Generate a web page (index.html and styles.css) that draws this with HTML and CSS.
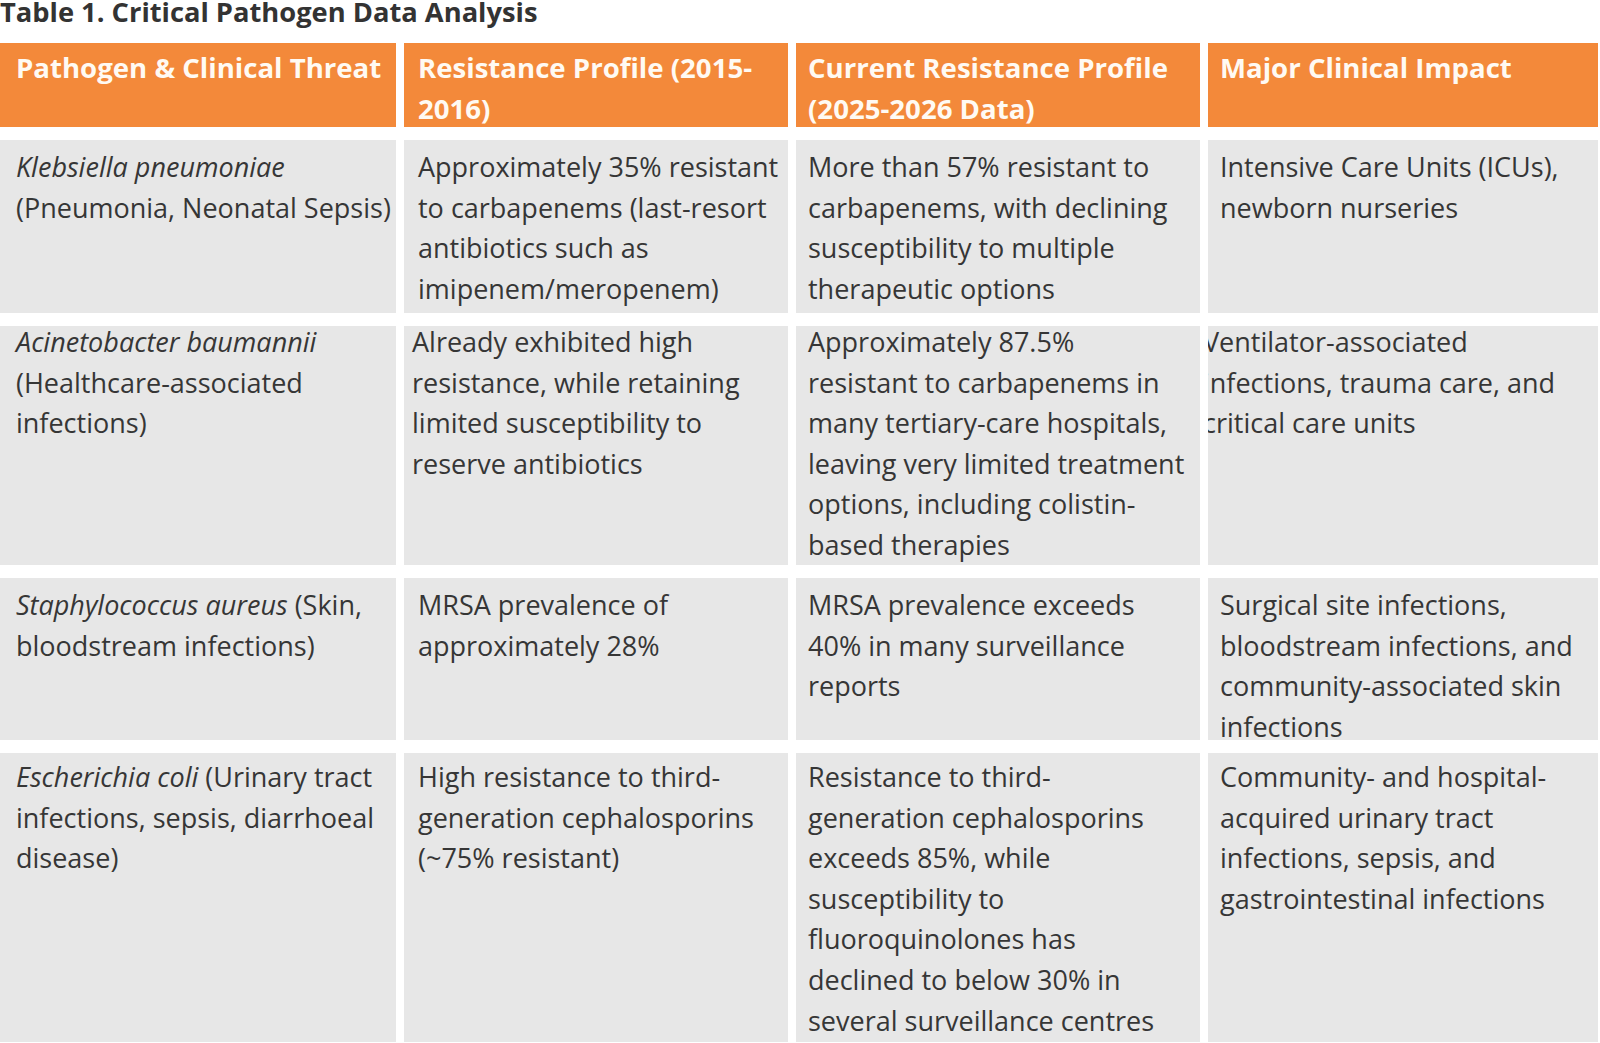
FILE: index.html
```html
<!DOCTYPE html>
<html lang="en">
<head>
<meta charset="utf-8">
<title>Table 1. Critical Pathogen Data Analysis</title>
<link rel="stylesheet" href="styles.css">
</head>
<body>
<main class="page">
  <h1 class="caption">Table 1. Critical Pathogen Data Analysis</h1>
  <div class="data-table" role="table">
    <div class="row row-head" role="row">
      <div class="cell c1" role="columnheader"><p>Pathogen &amp; Clinical Threat</p></div>
      <div class="cell c2" role="columnheader"><p>Resistance Profile (2015-2016)</p></div>
      <div class="cell c3" role="columnheader"><p>Current Resistance Profile (2025-2026 Data)</p></div>
      <div class="cell c4" role="columnheader"><p>Major Clinical Impact</p></div>
    </div>
    <div class="row row-1" role="row">
      <div class="cell c1" role="cell"><p><em>Klebsiella pneumoniae</em> (Pneumonia, Neonatal Sepsis)</p></div>
      <div class="cell c2" role="cell"><p>Approximately 35% resistant to carbapenems (last-resort antibiotics such as imipenem/meropenem)</p></div>
      <div class="cell c3" role="cell"><p>More than 57% resistant to carbapenems, with declining susceptibility to multiple therapeutic options</p></div>
      <div class="cell c4" role="cell"><p>Intensive Care Units (ICUs), newborn nurseries</p></div>
    </div>
    <div class="row row-2" role="row">
      <div class="cell c1" role="cell"><p><em>Acinetobacter baumannii</em> (Healthcare-associated infections)</p></div>
      <div class="cell c2" role="cell"><p>Already exhibited high resistance, while retaining limited susceptibility to reserve antibiotics</p></div>
      <div class="cell c3" role="cell"><p>Approximately 87.5% resistant to carbapenems in many tertiary-care hospitals, leaving very limited treatment options, including colistin-based therapies</p></div>
      <div class="cell c4" role="cell"><p>Ventilator-associated infections, trauma care, and critical care units</p></div>
    </div>
    <div class="row row-3" role="row">
      <div class="cell c1" role="cell"><p><em>Staphylococcus aureus</em> (Skin, bloodstream infections)</p></div>
      <div class="cell c2" role="cell"><p>MRSA prevalence of approximately 28%</p></div>
      <div class="cell c3" role="cell"><p>MRSA prevalence exceeds 40% in many surveillance reports</p></div>
      <div class="cell c4" role="cell"><p>Surgical site infections, bloodstream infections, and community-associated skin infections</p></div>
    </div>
    <div class="row row-4" role="row">
      <div class="cell c1" role="cell"><p><em>Escherichia coli</em> (Urinary tract infections, sepsis, diarrhoeal disease)</p></div>
      <div class="cell c2" role="cell"><p>High resistance to third-generation cephalosporins (~75% resistant)</p></div>
      <div class="cell c3" role="cell"><p>Resistance to third-generation cephalosporins exceeds 85%, while susceptibility to fluoroquinolones has declined to below 30% in several surveillance centres</p></div>
      <div class="cell c4" role="cell"><p>Community- and hospital-acquired urinary tract infections, sepsis, and gastrointestinal infections</p></div>
    </div>
  </div>
</main>
</body>
</html>
```
FILE: styles.css
```css
html, body {
  margin: 0;
  padding: 0;
  background: #ffffff;
}

body {
  font-family: "Open Sans", "Noto Sans", "Liberation Sans", sans-serif;
  color: #363636;
  overflow: hidden;
}

.page {
  width: 1600px;
}

.caption {
  margin: -2px 0 18px 0;
  padding-left: 0;
  font-size: 27.3px;
  line-height: 27px;
  font-weight: 700;
  color: #333333;
}

.data-table {
  display: grid;
  grid-template-columns: 396px 384px 404px 390px;
  grid-template-rows: 84px 173px 239px 162px 289px;
  column-gap: 8px;
  row-gap: 13px;
}

.row {
  display: contents;
}

.cell {
  background: #e7e7e7;
  font-size: 27px;
  line-height: 40.6px;
  padding-right: 0;
  min-width: 0;
}

.cell p {
  margin: 0;
}

.cell em {
  font-style: italic;
}

.c1 { padding-left: 16px; }
.c2 { padding-left: 14px; }
.c3 { padding-left: 12px; padding-right: 14px; }
.c4 { padding-left: 12px; }

.row-head .cell {
  background: #f3893a;
  color: #fffaf3;
  font-weight: 700;
  font-size: 27.6px;
  padding-top: 4px;
  padding-right: 0;
}

.row-1 .cell { padding-top: 7px; }
.row-2 .cell { padding-top: 0; }
.row-2 .cell p { margin-top: -4px; }
.row-2 .c2 { padding-left: 8px; }
.row-2 .c4 {
  padding-left: 0;
  overflow: hidden;
}
.row-2 .c4 p { margin-left: -5px; }
.row-3 .cell { padding-top: 7px; }
.row-4 .cell { padding-top: 4px; }
```
